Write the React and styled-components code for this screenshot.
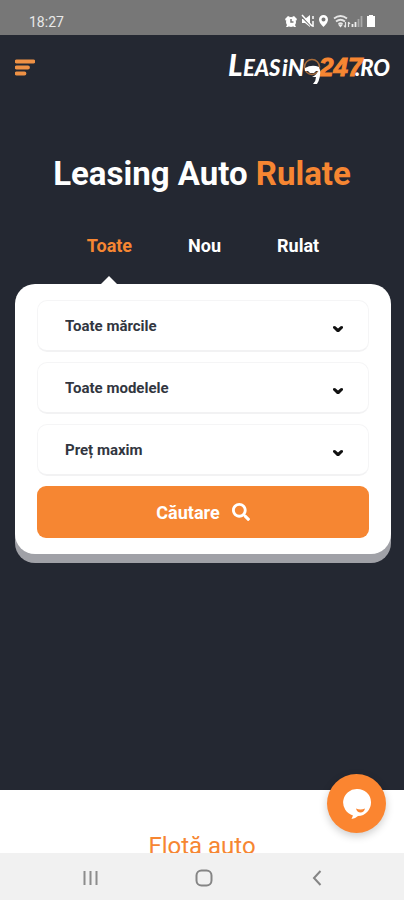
import React, { useState } from "react";
import styled, { createGlobalStyle } from "styled-components";
import { FaSearch } from "react-icons/fa";

const orange = "#f68632";
const navy = "#242832";

const GlobalStyle = createGlobalStyle`
  *, *::before, *::after { box-sizing: border-box; }
  body { margin: 0; font-family: Roboto, "Liberation Sans", sans-serif; background: #fff; }
  button, select { font-family: inherit; }
`;

const Screen = styled.div`
  display: flex;
  flex-direction: column;
  height: 100vh;
  overflow: hidden;
`;

const StatusBar = styled.header`
  flex: none;
  display: flex;
  align-items: center;
  justify-content: space-between;
  height: 35px;
  padding: 8px 26px 0 29px;
  background: #777;
  color: #e8e8e8;
  font-size: 14px;
`;

const StatusIcons = styled.svg`
  display: block;
  width: 94px;
  height: 16px;
`;

const Page = styled.main`
  flex: 1;
  min-height: 0;
  overflow: hidden;
`;

const Hero = styled.section`
  background: ${navy};
  padding-bottom: 236px;
`;

const TopBar = styled.div`
  display: flex;
  align-items: center;
  justify-content: space-between;
  height: 66px;
  padding: 0 12px 0 15px;
`;

const MenuButton = styled.button`
  border: 0;
  padding: 0;
  background: none;
  cursor: pointer;

  svg { display: block; }
`;

const LogoLink = styled.a`
  display: block;

  svg { display: block; overflow: visible; }
`;

const Title = styled.h1`
  margin: 0;
  padding-top: 53px;
  text-align: center;
  color: #fff;
  font-size: 33px;
  line-height: 40px;
  font-weight: 700;
`;

const Accent = styled.span`
  color: ${orange};
`;

const Tabs = styled.div`
  display: flex;
  justify-content: center;
  gap: 56px;
  padding: 40px 13px 0 15px;
`;

const Tab = styled.button`
  position: relative;
  border: 0;
  padding: 0 0 26px;
  background: none;
  color: ${(p) => (p.$active ? orange : "#fff")};
  font-size: 18px;
  line-height: 24px;
  font-weight: 700;
  cursor: pointer;

  &::after {
    content: "";
    display: ${(p) => (p.$active ? "block" : "none")};
    position: absolute;
    bottom: 0;
    left: 50%;
    margin-left: -8px;
    border: 8px solid transparent;
    border-top-width: 0;
    border-bottom-color: #fff;
  }
`;

const SearchCard = styled.form`
  display: flex;
  flex-direction: column;
  gap: 10px;
  margin: 0 13px 0 15px;
  padding: 16px 22px;
  border-radius: 20px;
  background: #fff;
  box-shadow: 0 9px 0 #a0a1a7;
`;

const Field = styled.label`
  display: grid;
  align-items: center;
  height: 52px;
  border: 1px solid #f5f5f6;
  border-bottom: 2px solid #f2f2f3;
  border-radius: 10px;
  background: #fff;

  > * { grid-area: 1 / 1; }

  svg {
    justify-self: end;
    margin: 6px 24px 0 0;
    pointer-events: none;
  }
`;

const Select = styled.select`
  appearance: none;
  width: 100%;
  height: 100%;
  border: 0;
  padding: 0 50px 0 27px;
  background: transparent;
  color: #32363f;
  font-size: 15px;
  font-weight: 700;
`;

const SearchButton = styled.button`
  display: flex;
  align-items: center;
  justify-content: center;
  gap: 12px;
  height: 52px;
  border: 0;
  border-radius: 9px;
  background: ${orange};
  color: #fff;
  font-size: 18px;
  font-weight: 700;
  cursor: pointer;
`;

const Fleet = styled.section`
  padding-top: 40px;
  background: #fff;
`;

const FleetTitle = styled.h2`
  margin: 0;
  text-align: center;
  color: ${orange};
  font-size: 24px;
  line-height: 32px;
  font-weight: 400;
`;

const ChatButton = styled.button`
  position: fixed;
  right: 18px;
  bottom: 67px;
  width: 59px;
  height: 59px;
  border: 0;
  border-radius: 50%;
  padding: 0;
  background: #fb8530;
  box-shadow: 0 3px 8px rgba(0, 0, 0, 0.2);
  cursor: pointer;

  svg { display: block; margin: auto; }
`;

const NavBar = styled.nav`
  flex: none;
  display: flex;
  align-items: center;
  justify-content: space-between;
  height: 47px;
  padding: 2px 76px 0 80px;
  background: #f1f1f1;
`;

const NavButton = styled.button`
  display: flex;
  border: 0;
  padding: 0;
  background: none;
`;

function Status() {
  return (
    <StatusIcons viewBox="0 0 94 16" aria-hidden="true">
      <g fill="#fff">
        <circle cx="7" cy="8" r="5" />
        <path d="M1 5L4 2l2 1-4 4zM13 5l-3-3-2 1 4 4zM3 11h3l-2 2H2zM8 11h3l1 2h-2z" />
        <path d="M18 5h3l5-4v12l-5-4h-3z" />
        <path d="M39.500 1A4.500 4.500 0 0 0 35 5.500C35 9 39.500 13 39.500 13S44 9 44 5.500A4.500 4.500 0 0 0 39.500 1zm0 2.500a2 2 0 1 1 0 4 2 2 0 0 1 0-4z" fillRule="evenodd" />
        <path d="M83 2h2V1h4v1h2v11h-8z" />
      </g>
      <path d="M7 5v3h2.500" fill="none" stroke="#777" strokeWidth="1.500" />
      <path d="M17 2l10 10" stroke="#777" strokeWidth="1.500" />
      <path d="M18 1l10 11M29 2v3m0 2v6" stroke="#fff" strokeWidth="1.500" />
      <g fill="none" stroke="#e6e6e6" strokeWidth="1.800">
        <path d="M50 4.500q6.500-5 13 0M52 7.500q4.500-3.500 9 0M54.500 10q2-1.500 4 0" />
        <path d="M56.500 13.500l-2.500-3h5z" fill="#eee" stroke="none" />
        <path d="M61.500 8v5M60 11.500l1.500 2M64.500 13V8M66 10l-1.500-2" strokeWidth="1.200" />
      </g>
      <path d="M68.500 13v-3M71.500 13V8" stroke="#eee" strokeWidth="1.800" />
      <path d="M74.500 13V5M77.500 13V2" stroke="#a9a9a9" strokeWidth="1.800" />
    </StatusIcons>
  );
}

function Logo() {
  return (
    <svg width="166" height="36" viewBox="0 0 166 36" role="img" aria-label="Leasing247.ro">
      <g fontFamily="Lato, sans-serif" fontStyle="italic" fontWeight="900" fill="#fff">
        <text x="2" y="26" fontSize="30">L</text>
        <text x="17" y="26" fontSize="22">EAS</text>
        <text x="56" y="26" fontSize="23">iN</text>
        <text x="129" y="26" fontSize="22">.RO</text>
      </g>
      <text
        x="93"
        y="26"
        fontFamily="Liberation Sans, sans-serif"
        fontStyle="italic"
        fontWeight="700"
        fontSize="26"
        fill={orange}
        stroke={orange}
      >
        247
      </text>
      <circle cx="86" cy="17" r="7.500" fill="none" stroke="#a86c3b" strokeWidth="1.600" />
      <path d="M79 18q7-4 14-1v4h-3l-2 2h-4l-2-2h-3z" fill="#fff" />
      <path d="M94 18q1 10-3 16h-4q3-3 3-7h-4q5-2 8-9z" fill="#fff" />
    </svg>
  );
}

function SelectField({ label }) {
  return (
    <Field>
      <Select aria-label={label}>
        <option>{label}</option>
      </Select>
      <svg width="12" height="8" viewBox="0 0 12 8" aria-hidden="true">
        <path d="M1 1.500L3 1L6 3.500L9 1L11 1.500V3L7 7H5L1 3z" fill="#111" />
      </svg>
    </Field>
  );
}

const tabs = ["Toate", "Nou", "Rulat"];
const filters = ["Toate mărcile", "Toate modelele", "Preț maxim"];

export default function App() {
  const [active, setActive] = useState("Toate");

  return (
    <Screen>
      <GlobalStyle />
      <StatusBar>
        <span>18:27</span>
        <Status />
      </StatusBar>
      <Page>
        <Hero>
          <TopBar>
            <MenuButton aria-label="Meniu">
              <svg width="20" height="18" viewBox="0 0 20 18">
                <path d="M1.500 2.500h17M1.500 8.500h11.500M1.500 14.500h8" stroke="#ee9145" strokeWidth="3.800" strokeLinecap="round" />
              </svg>
            </MenuButton>
            <LogoLink href="#">
              <Logo />
            </LogoLink>
          </TopBar>
          <Title>
            Leasing Auto <Accent>Rulate</Accent>
          </Title>
          <Tabs role="tablist">
            {tabs.map((name) => (
              <Tab
                key={name}
                role="tab"
                aria-selected={active === name}
                $active={active === name}
                onClick={() => setActive(name)}
              >
                {name}
              </Tab>
            ))}
          </Tabs>
          <SearchCard onSubmit={(e) => e.preventDefault()}>
            {filters.map((label) => (
              <SelectField key={label} label={label} />
            ))}
            <SearchButton type="submit">
              Căutare
              <FaSearch size={18} />
            </SearchButton>
          </SearchCard>
        </Hero>
        <Fleet>
          <FleetTitle>Flotă auto</FleetTitle>
        </Fleet>
      </Page>
      <ChatButton aria-label="Chat">
        <svg width="30" height="32" viewBox="0 0 30 32">
          <path d="M15 1a13.500 13.500 0 0 1 1 27q-2.500 2.500-6.500 3l1.500-3.500A13.500 13.500 0 0 1 15 1z" fill="#fff" />
          <path d="M14 20.500q4.500 2 9 0-1 4-4.500 4t-4.500-4z" fill="#fb8530" />
        </svg>
      </ChatButton>
      <NavBar>
        <NavButton aria-label="Recente">
          <svg width="20" height="20" viewBox="0 0 20 20">
            <path d="M4.500 3v14M10.500 3v14M16.500 3v14" stroke="#8c8c8c" strokeWidth="2" />
          </svg>
        </NavButton>
        <NavButton aria-label="Acasă">
          <svg width="20" height="20" viewBox="0 0 20 20">
            <rect x="2.500" y="2.500" width="15" height="15" rx="5" fill="none" stroke="#858585" strokeWidth="2" />
          </svg>
        </NavButton>
        <NavButton aria-label="Înapoi">
          <svg width="20" height="20" viewBox="0 0 20 20">
            <path d="M12.500 3L6 10l6.500 7" fill="none" stroke="#858585" strokeWidth="2" />
          </svg>
        </NavButton>
      </NavBar>
    </Screen>
  );
}
